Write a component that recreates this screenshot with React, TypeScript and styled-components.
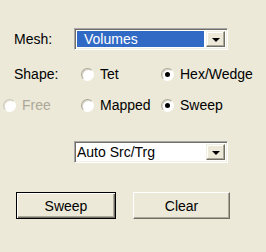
import styled, { createGlobalStyle } from "styled-components";

const GlobalStyle = createGlobalStyle`
  html, body {
    margin: 0;
    padding: 0;
    background: #ece9d8;
  }
`;

const Panel = styled.div`
  width: 266px;
  height: 252px;
  box-sizing: border-box;
  padding: 28px 0 0 3px;
  background: #ece9d8;
  font-family: "Liberation Sans", Arial, sans-serif;
  font-size: 14px;
  color: #000;
  display: flex;
  flex-direction: column;
`;

const Row = styled.div<{ $mt?: number; $h: number }>`
  display: grid;
  grid-template-columns: 71px 80px 100px;
  align-items: center;
  height: ${(p) => p.$h}px;
  margin-top: ${(p) => p.$mt ?? 0}px;
`;

const Label = styled.span`
  padding-left: 11px;
`;

const Combo = styled.div`
  grid-column: 2 / 4;
  width: 154px;
  height: 100%;
  box-sizing: border-box;
  display: flex;
  align-items: stretch;
  padding: 2px;
  background: #fff;
  border: 1px solid;
  border-color: #a7a6aa #fff #fff #a7a6aa;
  box-shadow: inset 1px 1px 0 #716f64, inset -1px -1px 0 #f1efe2;
`;

const ComboText = styled.div<{ $selected?: boolean }>`
  flex: 1;
  display: flex;
  align-items: center;
  padding-left: ${(p) => (p.$selected ? 7 : 0)}px;
  margin-right: 2px;
  background: ${(p) => (p.$selected ? "#316ac5" : "#fff")};
  color: ${(p) => (p.$selected ? "#fff" : "#000")};
  white-space: nowrap;
`;

const DropButton = styled.div`
  width: 19px;
  box-sizing: border-box;
  background: #ece9d8;
  border: 1px solid;
  border-color: #f1efe2 #716f64 #716f64 #f1efe2;
  box-shadow: inset -1px -1px 0 #aca899, inset 1px 1px 0 #fff;
  display: flex;
  align-items: center;
  justify-content: center;
`;

const Arrow = styled.span`
  width: 0;
  height: 0;
  border-left: 4px solid transparent;
  border-right: 4px solid transparent;
  border-top: 4px solid #000;
  margin-top: 1px;
`;

const Radio = styled.label<{ $pad?: number; $disabled?: boolean }>`
  display: flex;
  align-items: center;
  gap: 6px;
  padding-left: ${(p) => p.$pad ?? 0}px;
  color: ${(p) => (p.$disabled ? "#aca899" : "#000")};
  white-space: nowrap;
`;

const Circle = styled.span<{ $checked?: boolean; $disabled?: boolean }>`
  width: 13px;
  height: 13px;
  box-sizing: border-box;
  border-radius: 50%;
  background: #fff;
  border: 1px solid;
  border-color: ${(p) =>
    p.$disabled ? "#cac8bb #fff #fff #cac8bb" : "#aca899 #fff #fff #aca899"};
  box-shadow: ${(p) =>
    p.$disabled ? "inset 1px 1px 0 #e2dfd2" : "inset 1px 1px 0 #d8d5c6"};
  display: flex;
  align-items: center;
  justify-content: center;
  &::after {
    content: "";
    width: 5px;
    height: 5px;
    border-radius: 50%;
    background: #000;
    display: ${(p) => (p.$checked ? "block" : "none")};
  }
`;

const ButtonRow = styled.div`
  display: flex;
  gap: 17px;
  margin-top: 30px;
  padding-left: 13px;
`;

const Button = styled.button<{ $default?: boolean; $w: number }>`
  width: ${(p) => p.$w}px;
  height: 27px;
  box-sizing: border-box;
  font: inherit;
  color: #000;
  background: #ece9d8;
  padding: 0;
  border: 1px solid;
  border-color: ${(p) =>
    p.$default ? "#000" : "#fff #716f64 #716f64 #fff"};
  box-shadow: ${(p) =>
    p.$default
      ? "inset 1px 1px 0 #fff, inset -1px -1px 0 #716f64, inset -2px -2px 0 #aca899"
      : "inset -1px -1px 0 #aca899"};
`;

export default function App() {
  return (
    <>
      <GlobalStyle />
      <Panel>
        <Row $h={22}>
          <Label>Mesh:</Label>
          <Combo>
            <ComboText $selected>Volumes</ComboText>
            <DropButton>
              <Arrow />
            </DropButton>
          </Combo>
        </Row>
        <Row $h={16} $mt={16}>
          <Label>Shape:</Label>
          <Radio $pad={7}>
            <Circle />
            Tet
          </Radio>
          <Radio $pad={7}>
            <Circle $checked />
            Hex/Wedge
          </Radio>
        </Row>
        <Row $h={16} $mt={15}>
          <Radio $disabled>
            <Circle $disabled />
            Free
          </Radio>
          <Radio $pad={7}>
            <Circle />
            Mapped
          </Radio>
          <Radio $pad={7}>
            <Circle $checked />
            Sweep
          </Radio>
        </Row>
        <Row $h={21} $mt={28}>
          <span />
          <Combo>
            <ComboText>Auto Src/Trg</ComboText>
            <DropButton>
              <Arrow />
            </DropButton>
          </Combo>
        </Row>
        <ButtonRow>
          <Button $default $w={100}>
            Sweep
          </Button>
          <Button $w={97}>Clear</Button>
        </ButtonRow>
      </Panel>
    </>
  );
}
